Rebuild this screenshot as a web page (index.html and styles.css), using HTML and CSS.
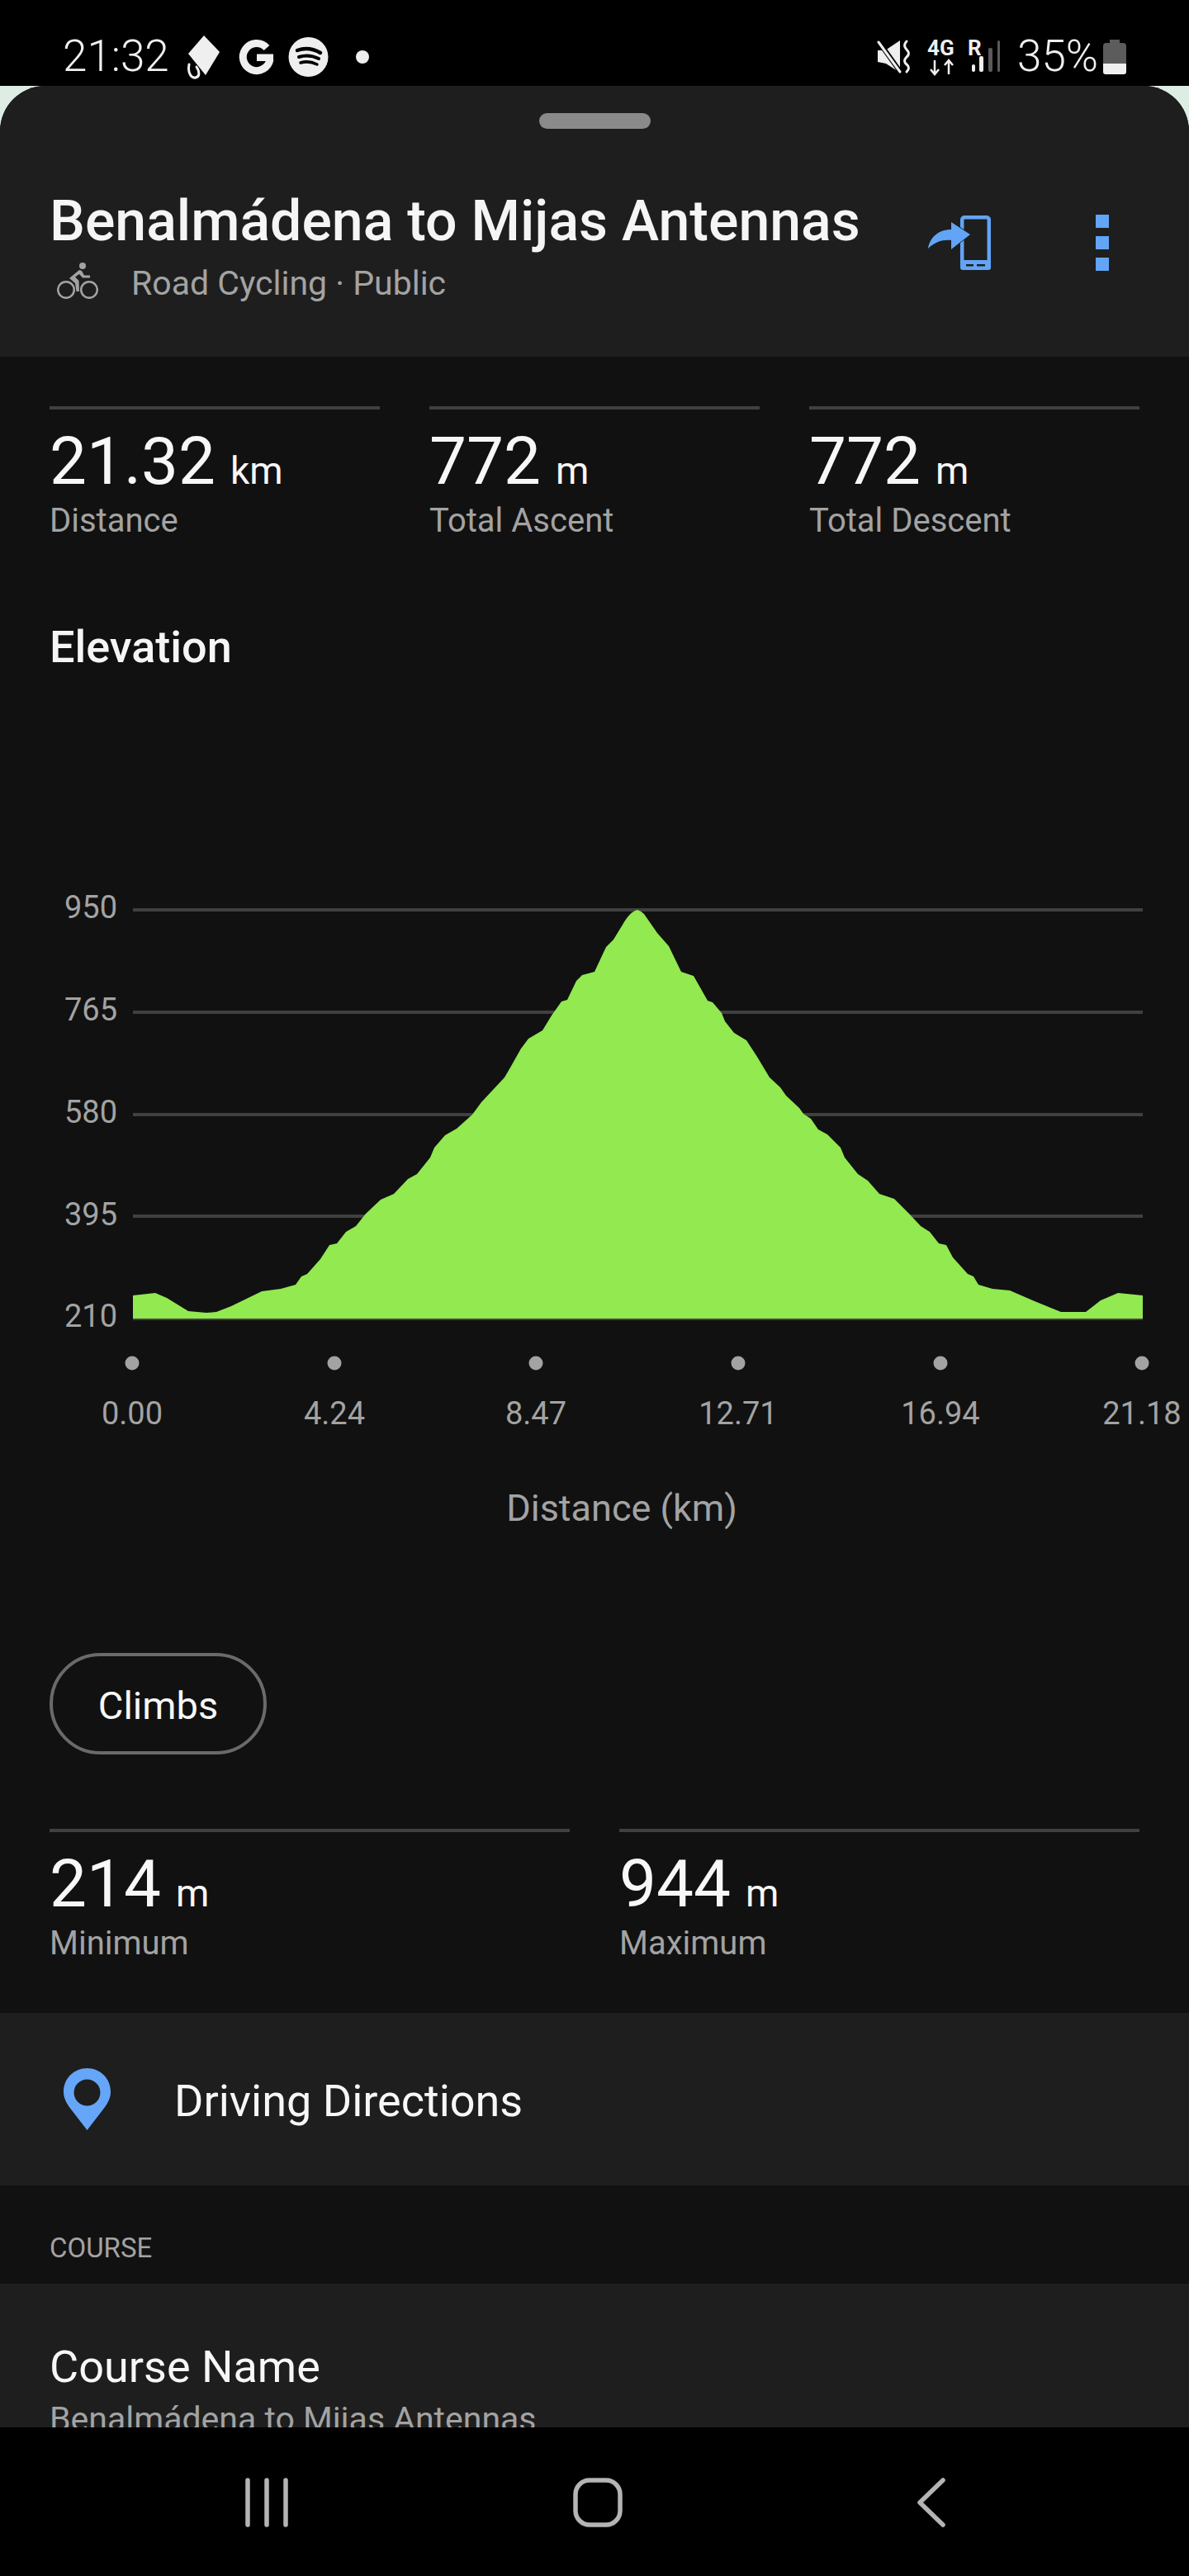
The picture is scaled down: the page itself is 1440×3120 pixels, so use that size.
FILE: index.html
```html
<!DOCTYPE html>
<html lang="en">
<head>
<meta charset="utf-8">
<title>Benalmádena to Mijas Antennas</title>
<link rel="stylesheet" href="styles.css">
</head>
<body>
<div class="page">
  <div class="status">
    <span class="clock">21:32</span>
    <svg class="ic-apps" viewBox="226 40 224 58" width="224" height="58" aria-hidden="true">
      <path class="w" d="M247 43 L266 63 L249 91 L228 65 Z"/>
      <path class="ws" d="M229 78 C227 89 232 95 237 94 C242 93 242 87 238 81"/>
      <path class="wt" d="M323 58 A16.500 16.500 0 1 0 327 72"/>
      <rect class="w" x="311" y="65.500" width="20" height="8.500"/>
      <circle class="w" cx="373.500" cy="69" r="24"/>
      <path class="k1" d="M360 61 Q374 56 388 64"/>
      <path class="k2" d="M362 69 Q374 65 386 71"/>
      <path class="k3" d="M364 76 Q374 73 384 78"/>
      <circle class="w" cx="439" cy="69" r="8"/>
    </svg>
    <span class="status-gap"></span>
    <svg class="ic-net" viewBox="1062 45 152 50" width="152" height="50" aria-hidden="true">
      <path class="w" d="M1063 62 L1072 62 L1090 50 L1090 89 L1073 78 L1063 76 Z"/>
      <path class="cut" d="M1059 44 L1096 96"/>
      <path class="ws2" d="M1064 52 L1090 88"/>
      <path class="ws2" d="M1098 51 q-5 5 0 10 q5 5 0 9 q-5 5 0 9 q5 4 0 9"/>
      <text class="net" x="1123" y="68">4G</text>
      <path class="arrow" d="M1132 74 V91 M1127 85 L1132 91 L1137 85 M1149 91 V74 M1144 80 L1149 74 L1154 80"/>
      <text class="net" x="1172" y="68">R</text>
      <rect class="w" x="1177" y="79" width="4" height="9" rx="2"/>
      <rect class="w" x="1186" y="69" width="5" height="19" rx="2"/>
      <rect class="dim" x="1197" y="59" width="5" height="29" rx="2"/>
      <rect class="dim" x="1208" y="50" width="3" height="38" rx="1.500"/>
    </svg>
    <span class="pct">35%</span>
    <svg class="ic-batt" viewBox="0 0 28 42" width="28" height="42" aria-hidden="true">
      <path class="batt-top" d="M8 0 H20 V4 H24 Q28 4 28 8 V29 H0 V8 Q0 4 4 4 H8 Z"/>
      <path class="w" d="M0 29 H28 V39 Q28 42 25 42 H3 Q0 42 0 39 Z"/>
    </svg>
  </div>

  <div class="backdrop">
    <main class="sheet">
      <header class="head">
        <div class="handle"></div>
        <div class="head-row">
          <div class="head-text">
            <h1 class="title">Benalmádena to Mijas Antennas</h1>
            <div class="sub">
              <svg class="ic-bike" viewBox="69 318 50 44" width="50" height="44" aria-hidden="true">
                <circle class="bike-w" cx="80" cy="351" r="9.800"/>
                <circle class="bike-w" cx="108" cy="351" r="9.800"/>
                <circle class="bike-f" cx="100" cy="322" r="4"/>
                <path class="bike-f" d="M96 327 L84 337 L91 343 L92.500 353 L96 353 L95.500 340 L91 335.500 L96 332 L100 336.500 L109 336.500 L109 333.500 L102 333.500 L99 328 Z"/>
              </svg>
              <span class="sub-text">Road Cycling · Public</span>
            </div>
          </div>
          <svg class="ic-share" viewBox="1124 261 76 66" width="76" height="66" aria-hidden="true">
            <rect class="b-s" x="1165.200" y="263.200" width="32.600" height="61.600" rx="3"/>
            <rect class="b-f" x="1163" y="315" width="37" height="12" rx="3"/>
            <rect class="b-c" x="1170" y="320" width="9" height="2.500"/>
            <rect class="b-c" x="1183" y="320" width="10" height="2.500"/>
            <path class="b-a" d="M1175 284 L1152 269 L1152 278 C1136 278 1126 288 1124 301 C1132 293 1142 290 1152 291 L1152 302 Z"/>
          </svg>
          <div class="dots"><i></i><i></i><i></i></div>
        </div>
      </header>

      <section class="stats stats-3">
        <div class="stat"><div class="val">21.32<span class="unit">km</span></div><div class="lab">Distance</div></div>
        <div class="stat"><div class="val">772<span class="unit">m</span></div><div class="lab">Total Ascent</div></div>
        <div class="stat"><div class="val">772<span class="unit">m</span></div><div class="lab">Total Descent</div></div>
      </section>

      <h2 class="elev">Elevation</h2>

      <svg class="chart" viewBox="0 816 1440 1134" width="1440" height="1134" role="img" aria-label="Elevation chart">
        <g class="grid">
          <rect x="161" y="1100" width="1223" height="4"/>
          <rect x="161" y="1224" width="1223" height="4"/>
          <rect x="161" y="1348" width="1223" height="4"/>
          <rect x="161" y="1471" width="1223" height="4"/>
          <rect x="161" y="1595" width="1223" height="4"/>
        </g>
        <path class="area" d="M161 1597 L161 1569 L188 1566 L202 1572 L228 1588 L250 1590 L262 1589 L280 1582 L317 1564 L340 1561 L358 1556 L365 1546 L372 1543 L388 1525 L399 1508 L408 1506 L419 1492 L431 1485 L443 1470 L461 1453 L477 1446 L494 1428 L505 1422 L521 1402 L526 1390 L539 1375 L553 1367 L572 1350 L583 1335 L597 1320 L611 1305 L618 1293 L631 1270 L640 1258 L657 1248 L668 1230 L680 1213 L687 1211 L698 1188 L705 1181 L720 1177 L734 1147 L743 1138 L754 1120 Q763 1104 772 1102 Q776 1103 780 1107 L796 1130 L810 1146 L825 1177 L840 1182 L857 1212 L863 1214 L874 1227 L878 1237 L889 1251 L904 1260 L917 1280 L932 1305 L945 1317 L952 1327 L968 1342 L973 1349 L982 1355 L991 1368 L1002 1374 L1018 1390 L1023 1402 L1039 1422 L1051 1430 L1065 1446 L1083 1452 L1101 1470 L1115 1485 L1126 1492 L1137 1506 L1146 1508 L1154 1523 L1172 1543 L1179 1546 L1185 1556 L1202 1561 L1223 1563 L1253 1576 L1285 1589 L1315 1589 L1333 1575 L1354 1566 L1384 1569 L1384 1597 Z"/>
        <g class="axis ax-y">
          <text x="142" y="1112">950</text>
          <text x="142" y="1236">765</text>
          <text x="142" y="1360">580</text>
          <text x="142" y="1484">395</text>
          <text x="142" y="1607">210</text>
        </g>
        <g class="ticks">
          <circle cx="160" cy="1651" r="8.500"/>
          <circle cx="405" cy="1651" r="8.500"/>
          <circle cx="649" cy="1651" r="8.500"/>
          <circle cx="894" cy="1651" r="8.500"/>
          <circle cx="1139" cy="1651" r="8.500"/>
          <circle cx="1383" cy="1651" r="8.500"/>
        </g>
        <g class="axis ax-x">
          <text x="160" y="1725">0.00</text>
          <text x="405" y="1725">4.24</text>
          <text x="649" y="1725">8.47</text>
          <text x="894" y="1725">12.71</text>
          <text x="1139" y="1725">16.94</text>
          <text x="1383" y="1725">21.18</text>
        </g>
        <text class="ax-title" x="753" y="1842">Distance (km)</text>
      </svg>

      <button class="pill" type="button">Climbs</button>

      <section class="stats stats-2">
        <div class="stat"><div class="val">214<span class="unit">m</span></div><div class="lab">Minimum</div></div>
        <div class="stat"><div class="val">944<span class="unit">m</span></div><div class="lab">Maximum</div></div>
      </section>

      <div class="drive">
        <svg class="ic-pin" viewBox="0 0 57 75" width="57" height="75" aria-hidden="true">
          <path class="pin" fill-rule="evenodd" d="M28.500 0 C44.500 0 57 12.500 57 28.500 C57 37 53 43.500 47 51 L28.500 75 L10 51 C4 43.500 0 37 0 28.500 C0 12.500 12.500 0 28.500 0 Z M28.500 13.500 A16 16 0 1 0 28.500 45.500 A16 16 0 1 0 28.500 13.500 Z"/>
        </svg>
        <span class="drive-text">Driving Directions</span>
      </div>

      <div class="section-label">COURSE</div>

      <div class="course">
        <div class="course-name">Course Name</div>
        <div class="course-val">Benalmádena to Mijas Antennas</div>
      </div>
    </main>
  </div>

  <nav class="nav">
    <svg class="nav-recents" viewBox="0 0 54 60" width="54" height="60" aria-hidden="true">
      <path class="nav-s" d="M5 3 V57 M28 3 V57 M51 3 V57"/>
    </svg>
    <svg class="nav-home" viewBox="0 0 60 60" width="60" height="60" aria-hidden="true">
      <rect class="nav-s" x="3" y="3" width="54" height="54" rx="17"/>
    </svg>
    <svg class="nav-back" viewBox="0 0 34 60" width="34" height="60" aria-hidden="true">
      <path class="nav-s" d="M31 3 L3 30 L31 57" />
    </svg>
  </nav>
</div>
</body>
</html>
```

FILE: styles.css
```css
* { box-sizing: border-box; }
html, body { margin: 0; padding: 0; background: #000; }
body { font-family: Roboto, "Noto Sans", sans-serif; color: #f5f5f5; }

.page { width: 1440px; height: 3120px; display: flex; flex-direction: column; overflow: hidden; }

/* status bar */
.status { height: 104px; flex: none; padding: 32px 0 0 76px; display: flex; align-items: center; background: #000; color: #f0f0f0; }
.clock { font-size: 53px; line-height: 60px; font-weight: 300; width: 150px; }
.ic-apps { display: block; margin-top: 2px; }
.status-gap { flex: 1; }
.ic-net { display: block; margin-top: 2px; }
.pct { font-size: 53px; line-height: 60px; font-weight: 300; margin-left: 18px; width: 104px; }
.ic-batt { display: block; margin: 2px 76px 0 0; }
.w { fill: #efefef; }
.ws { fill: none; stroke: #efefef; stroke-width: 3; stroke-linecap: round; }
.ws2 { fill: none; stroke: #efefef; stroke-width: 3; stroke-linecap: round; }
.wt { fill: none; stroke: #efefef; stroke-width: 9; }
.k1, .k2, .k3 { fill: none; stroke: #000; stroke-linecap: round; }
.k1 { stroke-width: 4.500; }
.k2 { stroke-width: 4; }
.k3 { stroke-width: 3.500; }
.cut { stroke: #000; stroke-width: 6; fill: none; }
.net { font-family: Roboto, sans-serif; font-size: 26px; font-weight: 700; fill: #efefef; }
.arrow { fill: none; stroke: #efefef; stroke-width: 2.500; }
.dim { fill: #5a5a5a; }
.batt-top { fill: #5c5c5c; }

/* sheet */
.backdrop { flex: 1; min-height: 0; background: #deede3; overflow: hidden; }
.sheet { height: 100%; background: #111111; border-radius: 55px 55px 0 0; overflow: hidden; }

.head { background: #1e1e1e; padding: 33px 0 64px; }
.handle { width: 135px; height: 19px; margin: 0 auto 72px; background: #8a8a8a; border-radius: 10px; }
.head-row { display: flex; align-items: flex-start; padding-left: 60px; }
.head-text { width: 1064px; }
.title { margin: 0; font-size: 68px; line-height: 80px; font-weight: 500; color: #f5f5f5; white-space: nowrap; }
.sub { display: flex; align-items: flex-start; margin-top: 10px; padding-left: 9px; gap: 40px; }
.ic-bike { display: block; flex: none; }
.bike-w { fill: none; stroke: #a3a3a3; stroke-width: 2.500; }
.bike-f { fill: #a3a3a3; }
.sub-text { font-size: 41px; line-height: 50px; color: #a3a3a3; }
.ic-share { display: block; flex: none; margin-top: 33px; }
.dots { display: flex; flex-direction: column; gap: 10px; margin: 32px 0 0 127px; }
.dots i { display: block; width: 16px; height: 16px; background: #62a4f6; }
.b-s { fill: none; stroke: #62a4f6; stroke-width: 4.500; }
.b-f, .b-a { fill: #62a4f6; }
.b-a { stroke: #1e1e1e; stroke-width: 1.500; paint-order: stroke; }
.b-c { fill: #1e1e1e; }

/* stats */
.stats { display: grid; padding: 0 60px; }
.stats-3 { grid-template-columns: repeat(3, 400px); column-gap: 60px; padding-top: 60px; }
.stats-2 { grid-template-columns: repeat(2, 630px); column-gap: 60px; margin-top: 90px; }
.stat { border-top: 4px solid #404040; padding: 18px 0 0; height: 163px; }
.val { font-size: 80px; line-height: 90px; font-weight: 400; color: #f7f7f7; white-space: nowrap; }
.unit { font-size: 46px; line-height: 1; margin-left: 18px; }
.lab { font-size: 40px; line-height: 50px; margin-top: 2px; color: #a3a3a3; }

.elev { margin: 97px 0 0 60px; font-size: 54px; line-height: 64px; font-weight: 500; color: #f5f5f5; }

/* chart */
.chart { display: block; }
.grid rect { fill: #404040; }
.area { fill: #92e950; }
.axis text { font-size: 38px; fill: #a3a3a3; }
.ax-y text { text-anchor: end; }
.ax-x text { text-anchor: middle; }
.ticks circle { fill: #a3a3a3; }
.ax-title { font-size: 45px; fill: #a3a3a3; text-anchor: middle; }

.pill { display: block; width: 263px; height: 123px; margin: 52px 0 0 60px; padding: 5px 0 0; border: 4px solid #6a6a6a; border-radius: 62px; background: transparent; color: #f7f7f7; font-family: inherit; font-size: 47px; line-height: 60px; }

/* rows */
.drive { height: 209px; margin-top: 60px; padding: 0 0 0 77px; background: #1e1e1e; display: flex; align-items: center; gap: 77px; }
.ic-pin { display: block; flex: none; margin-top: -1px; }
.pin { fill: #66a6f8; }
.drive-text { font-size: 54px; line-height: 64px; color: #f7f7f7; padding-top: 4px; }

.section-label { padding: 56px 0 23px 60px; font-size: 33px; line-height: 40px; color: #a3a3a3; }

.course { padding: 69px 0 0 60px; background: #1e1e1e; height: 174px; overflow: hidden; }
.course-name { font-size: 54px; line-height: 64px; color: #f7f7f7; }
.course-val { font-size: 41px; line-height: 50px; margin-top: 6px; color: #a3a3a3; }

/* nav */
.nav { height: 180px; flex: none; background: #000; display: flex; align-items: center; padding: 2px 0 0 295px; }
.nav svg { display: block; flex: none; }
.nav-home { margin-left: 345px; }
.nav-back { margin-left: 357px; }
.nav-s { fill: none; stroke: #b4b4b4; stroke-width: 5.500; stroke-linecap: round; stroke-linejoin: round; }
```
